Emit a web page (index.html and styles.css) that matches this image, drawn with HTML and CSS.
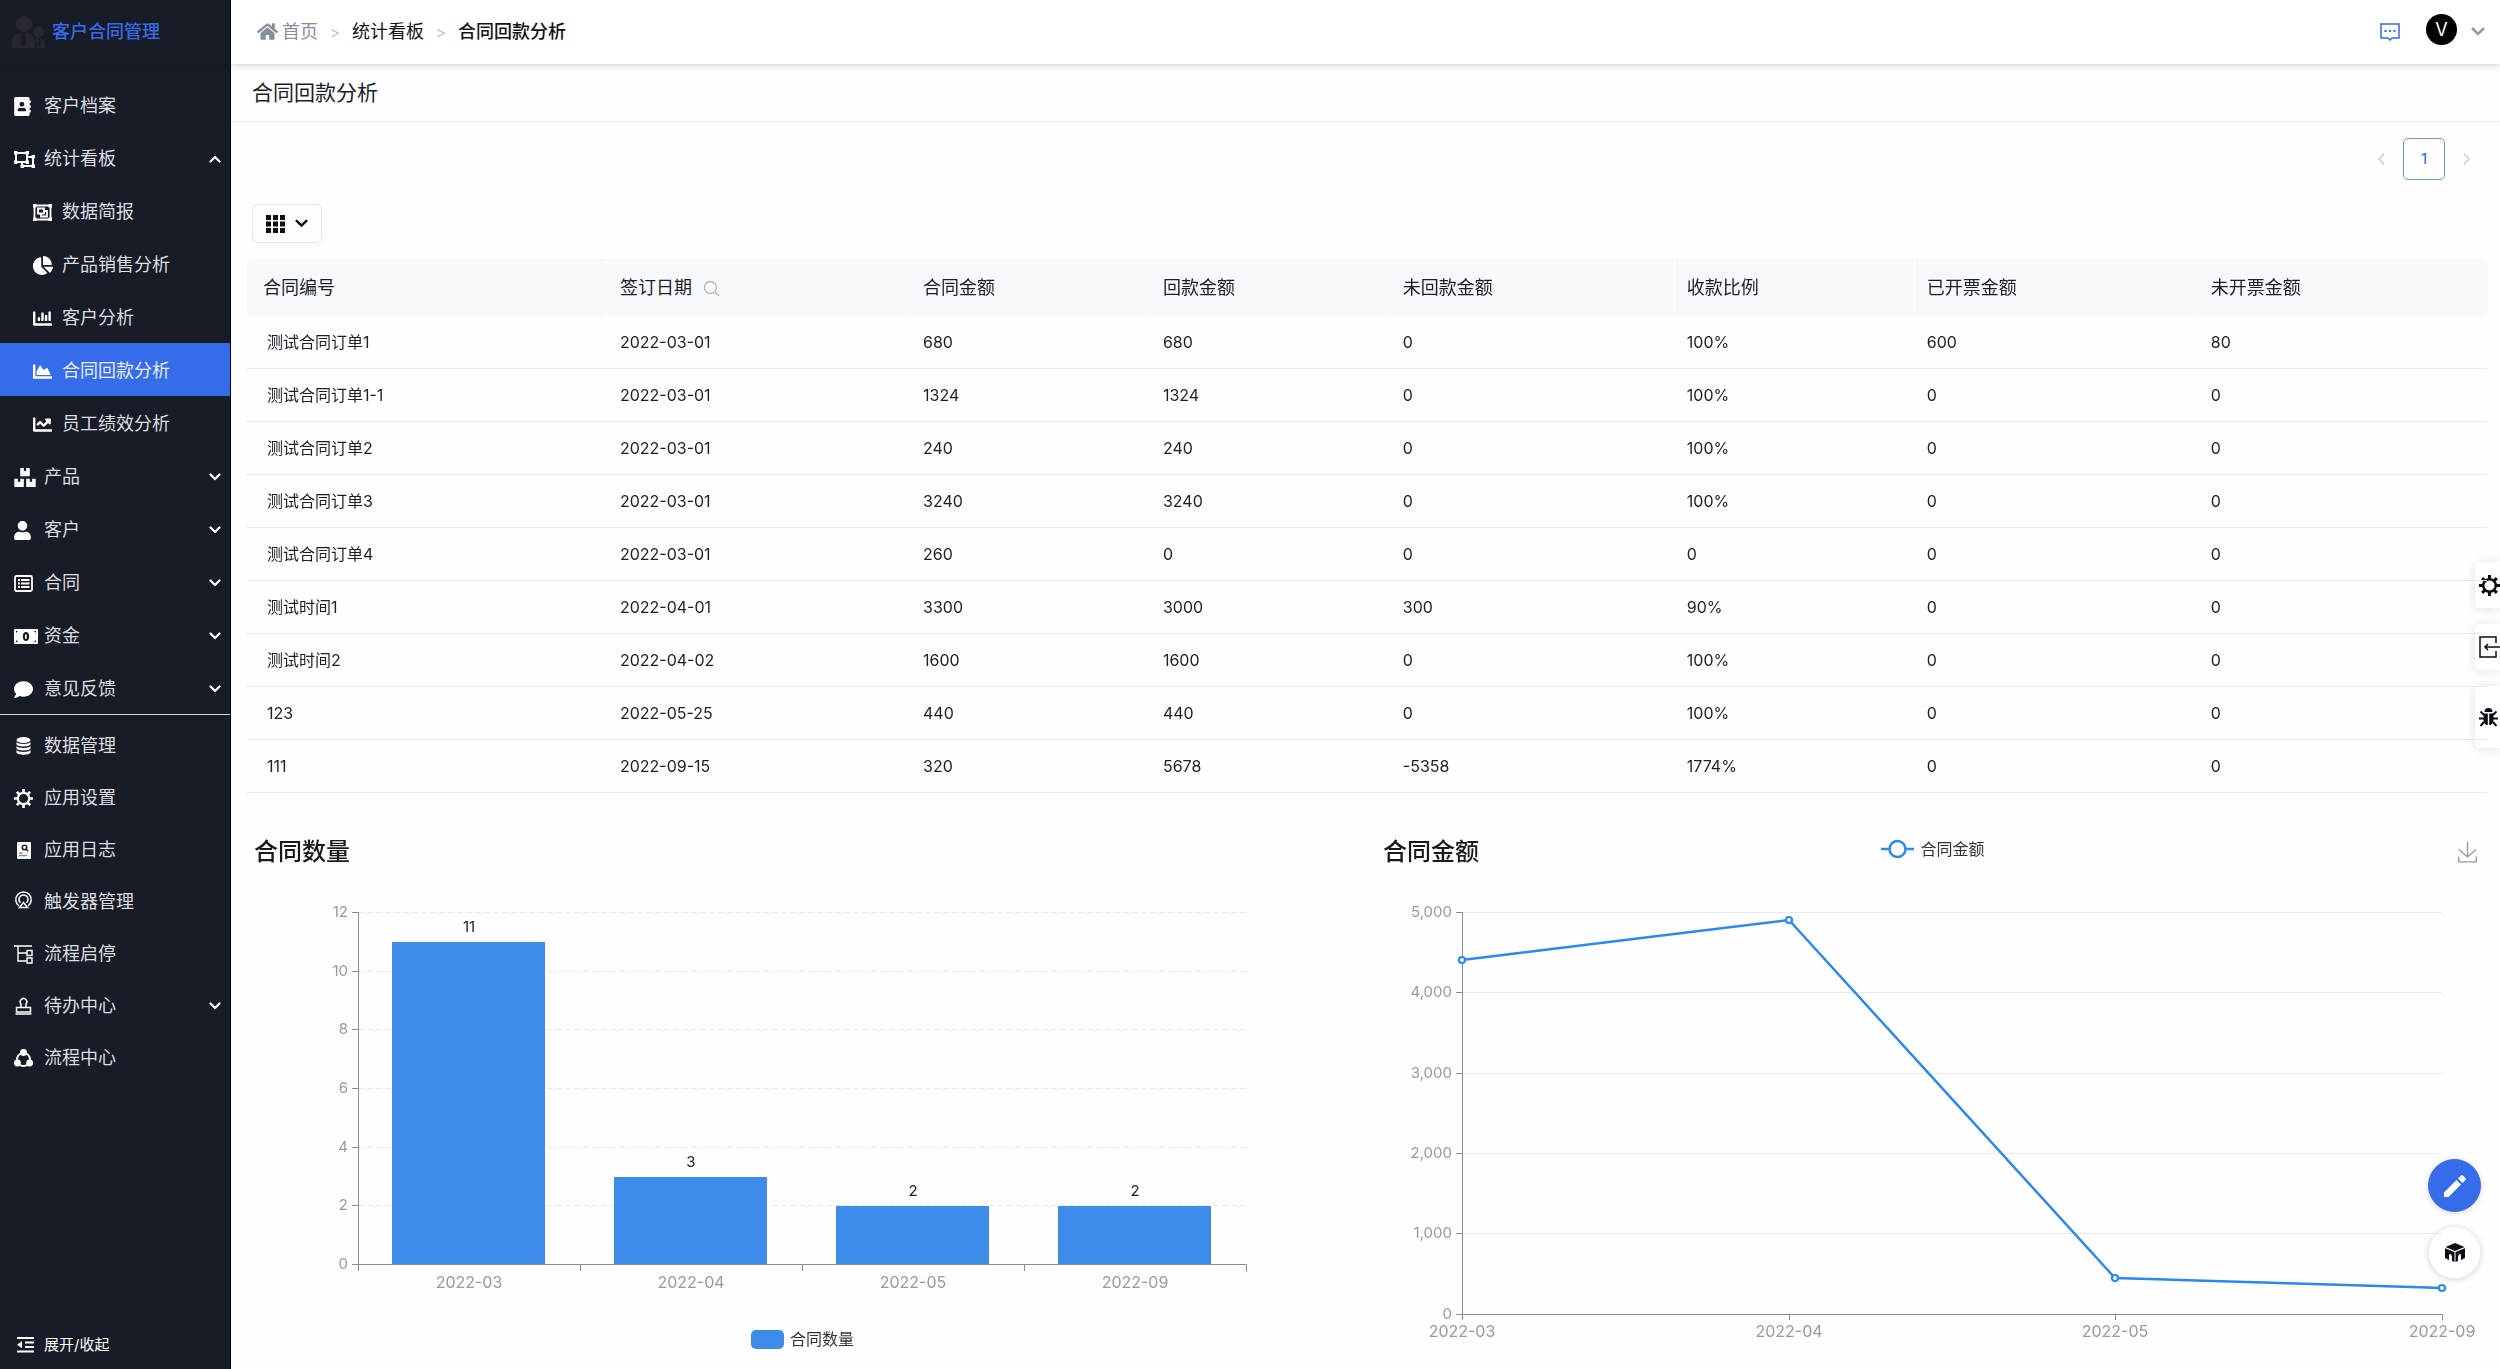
FILE: index.html
```html
<!DOCTYPE html>
<html lang="zh-CN">
<head>
<meta charset="utf-8">
<title>合同回款分析</title>
<link rel="stylesheet" href="styles.css">
</head>
<body>
<svg class="defs" aria-hidden="true">
  <symbol id="chevron" viewBox="0 0 12 8"><path d="M1.5 1.5L6 6l4.5-4.5" fill="none" stroke="currentColor" stroke-width="2.2" stroke-linecap="round"/></symbol>
  <symbol id="gear" viewBox="0 0 20 20"><circle cx="10" cy="10" r="6" fill="none" stroke="currentColor" stroke-width="2.4"/><path d="M10 0v4M10 16v4M0 10h4M16 10h4M3 3l2.8 2.8M14.2 14.2L17 17M17 3l-2.8 2.8M5.8 14.2L3 17" stroke="currentColor" stroke-width="2.8" fill="none"/></symbol>
</svg>
<div class="app">
  <aside class="sidebar">
    <a class="brand" href="#">
      <svg class="brand-logo" viewBox="0 0 33 32"><circle cx="12" cy="8" r="8"/><circle cx="26.500" cy="16" r="5.500"/><path d="M0 32v-6c0-5 3-8 8-9l2 1.500-1 9 2.500 3 2.500-3-1-9 2-1.500c5 1 8 4 8 9v6zM24.500 32v-6c0-2-1-3.500-1.500-4l3 .5-.5 6 1.500 2 1.500-2-.5-6c3 0 5 2 5 4.500v5z"/></svg>
      <span>客户合同管理</span>
    </a>
    <nav class="menu">
      <a href="#"><span class="slot"><svg width="17" height="19" viewBox="0 0 448 512"><path d="M436 160c6.600 0 12-5.400 12-12v-40c0-6.600-5.400-12-12-12h-20V48c0-26.500-21.500-48-48-48H48C21.500 0 0 21.500 0 48v416c0 26.500 21.500 48 48 48h320c26.500 0 48-21.500 48-48v-48h20c6.600 0 12-5.400 12-12v-40c0-6.600-5.400-12-12-12h-20v-64h20c6.600 0 12-5.400 12-12v-40c0-6.600-5.400-12-12-12h-20v-64h20zm-228-32c35.300 0 64 28.700 64 64s-28.700 64-64 64-64-28.700-64-64 28.700-64 64-64zm112 236.800c0 10.600-10 19.200-22.400 19.200H118.400C106 384 96 375.400 96 364.800v-19.200c0-31.800 30.100-57.600 67.200-57.600h5c12.300 5.100 25.700 8 39.800 8s27.600-2.900 39.800-8h5c37.100 0 67.200 25.800 67.200 57.600v19.200z"/></svg></span>客户档案</a>
      <button type="button" aria-expanded="true"><span class="slot"><svg width="21" height="17" viewBox="0 0 21 17"><path d="M2 2h11v9H2zM13 6h6v9H8v-4" fill="none" stroke="currentColor" stroke-width="2"/><path d="M0 0h3.500v3.500H0zM11.500 0H15v3.500h-3.500zM0 9.500h3.500V13H0zM11.500 9.500H15V13h-3.500zM17.500 4H21v3.500h-3.500zM17.500 13.500H21V17h-3.500zM6.500 13.500H10V17H6.500z"/></svg></span>统计看板<svg class="arrow up"><use href="#chevron"/></svg></button>
      <a class="sub" href="#"><span class="slot"><svg width="19" height="17" viewBox="0 0 19 17"><path d="M1.500 1.500h16v14h-16z" fill="none" stroke="currentColor" stroke-width="1.800"/><path d="M5 4.500h6v5H5zM11 7h3v5.500H8v-3" fill="none" stroke="currentColor" stroke-width="1.800"/><path d="M0 0h3.500v3.500H0zM15.500 0H19v3.500h-3.500zM0 13.500h3.500V17H0zM15.500 13.500H19V17h-3.500z"/></svg></span>数据简报</a>
      <a class="sub" href="#"><span class="slot"><svg width="20" height="19" viewBox="0 0 544 512"><path d="M527.790 288H290.500l158.030 158.030c6.040 6.040 15.980 6.530 22.190.68 38.700-36.460 65.320-85.560 73.130-140.860 1.340-9.460-6.510-17.850-16.060-17.850zm-15.830-64.800C503.720 103.740 408.260 8.280 288.800.04 279.680-.59 272 7.100 272 16.240V240h223.770c9.140 0 16.820-7.680 16.190-16.800zM224 288V50.710c0-9.550-8.390-17.400-17.840-16.060C86.990 51.490-4.100 155.600.14 280.370 4.500 408.510 114.830 513.590 243.030 511.980c50.400-.63 96.970-16.870 135.260-44.030 7.900-5.600 8.420-17.230 1.570-24.080L224 288z"/></svg></span>产品销售分析</a>
      <a class="sub" href="#"><span class="slot"><svg width="19" height="19" viewBox="0 0 512 512"><path d="M332.800 320h38.400c6.400 0 12.800-6.400 12.800-12.800V172.800c0-6.400-6.400-12.800-12.800-12.800h-38.400c-6.400 0-12.800 6.400-12.800 12.800v134.400c0 6.400 6.400 12.800 12.800 12.800zm96 0h38.400c6.400 0 12.800-6.400 12.800-12.800V76.800c0-6.400-6.400-12.800-12.800-12.800h-38.400c-6.400 0-12.800 6.400-12.800 12.800v230.400c0 6.400 6.400 12.800 12.800 12.800zm-288 0h38.400c6.400 0 12.800-6.400 12.800-12.800v-70.400c0-6.400-6.400-12.800-12.800-12.800h-38.400c-6.400 0-12.800 6.400-12.800 12.800v70.400c0 6.400 6.400 12.800 12.800 12.800zm96 0h38.400c6.400 0 12.800-6.400 12.800-12.800V108.800c0-6.400-6.400-12.800-12.800-12.800h-38.400c-6.400 0-12.800 6.400-12.800 12.800v198.400c0 6.400 6.400 12.800 12.800 12.800zM496 384H64V80c0-8.840-7.160-16-16-16H16C7.160 64 0 71.160 0 80v336c0 17.670 14.330 32 32 32h464c8.840 0 16-7.160 16-16v-32c0-8.840-7.160-16-16-16z"/></svg></span>客户分析</a>
      <a class="sub active" href="#" aria-current="page"><span class="slot"><svg width="19" height="19" viewBox="0 0 512 512"><path d="M500 384c6.600 0 12 5.400 12 12v40c0 6.600-5.400 12-12 12H12c-6.600 0-12-5.400-12-12V76c0-6.600 5.400-12 12-12h40c6.600 0 12 5.400 12 12v308h436zM372.700 159.500L288 216l-85.300-113.700c-5.100-6.800-15.500-6.300-19.900 1L96 248v104h384l-89.900-187.800c-3.200-6.500-11.400-8.700-17.400-4.700z"/></svg></span>合同回款分析</a>
      <a class="sub" href="#"><span class="slot"><svg width="19" height="19" viewBox="0 0 512 512"><path d="M496 384H64V80c0-8.840-7.160-16-16-16H16C7.160 64 0 71.160 0 80v336c0 17.670 14.330 32 32 32h464c8.840 0 16-7.160 16-16v-32c0-8.840-7.160-16-16-16zM464 96H345.940c-21.380 0-32.090 25.850-16.970 40.970l32.400 32.400L288 242.750l-73.370-73.370c-12.500-12.500-32.760-12.500-45.250 0l-68.690 68.690c-6.250 6.250-6.250 16.380 0 22.630l22.620 22.620c6.250 6.250 16.380 6.250 22.630 0L192 237.250l73.370 73.370c12.500 12.500 32.760 12.500 45.250 0l96-96 32.400 32.400c15.120 15.120 40.970 4.410 40.970-16.970V112c.01-8.840-7.150-16-15.990-16z"/></svg></span>员工绩效分析</a>
      <button type="button"><span class="slot"><svg width="22" height="19" viewBox="0 0 576 512"><path d="M560 288h-80v96l-32-21.300-32 21.300v-96h-80c-8.800 0-16 7.200-16 16v192c0 8.800 7.200 16 16 16h224c8.800 0 16-7.200 16-16V304c0-8.800-7.200-16-16-16zm-384-64h224c8.800 0 16-7.200 16-16V16c0-8.800-7.200-16-16-16h-80v96l-32-21.300L256 96V0h-80c-8.800 0-16 7.200-16 16v192c0 8.800 7.200 16 16 16zm64 64h-80v96l-32-21.300L96 384v-96H16c-8.800 0-16 7.200-16 16v192c0 8.800 7.200 16 16 16h224c8.800 0 16-7.200 16-16V304c0-8.800-7.200-16-16-16z"/></svg></span>产品<svg class="arrow"><use href="#chevron"/></svg></button>
      <button type="button"><span class="slot"><svg width="17" height="19" viewBox="0 0 448 512"><path d="M224 256c70.700 0 128-57.300 128-128S294.700 0 224 0 96 57.300 96 128s57.300 128 128 128zm89.600 32h-16.700c-22.200 10.200-46.900 16-72.900 16s-50.600-5.800-72.900-16h-16.700C60.200 288 0 348.200 0 422.400V464c0 26.500 21.500 48 48 48h352c26.500 0 48-21.500 48-48v-41.600c0-74.200-60.200-134.400-134.400-134.400z"/></svg></span>客户<svg class="arrow"><use href="#chevron"/></svg></button>
      <button type="button"><span class="slot"><svg width="19" height="17" viewBox="0 0 19 17"><rect x="1" y="1" width="17" height="15" rx="1.500" fill="none" stroke="currentColor" stroke-width="1.800"/><path d="M4 4h2v2H4zM7 4h8.500v2H7zM4 7.500h2v2H4zM7 7.500h8.500v2H7zM4 11h2v2H4zM7 11h8.500v2H7z"/></svg></span>合同<svg class="arrow"><use href="#chevron"/></svg></button>
      <button type="button"><span class="slot"><svg width="24" height="15" viewBox="0 0 24 15"><path fill-rule="evenodd" d="M1 0h22a1 1 0 0 1 1 1v13a1 1 0 0 1-1 1H1a1 1 0 0 1-1-1V1a1 1 0 0 1 1-1zM2 2v2l2-2zM22 2v2l-2-2zM2 13v-2l2 2zM22 13v-2l-2 2zM12 3c-2 0-3.200 2-3.200 4.500S10 12 12 12s3.200-2 3.200-4.500S14 3 12 3z"/><path d="M11 5.500h1.700v4.200H11z"/></svg></span>资金<svg class="arrow"><use href="#chevron"/></svg></button>
      <button type="button"><span class="slot"><svg width="19" height="19" viewBox="0 0 512 512"><path d="M256 32C114.600 32 0 125.100 0 240c0 49.600 21.400 95 57 130.700C44.500 421.100 2.700 466 2.200 466.500c-2.200 2.300-2.800 5.700-1.500 8.700S4.800 480 8 480c66.300 0 116-31.800 140.600-51.400 32.700 12.300 69 19.400 107.400 19.400 141.400 0 256-93.100 256-208S397.400 32 256 32z"/></svg></span>意见反馈<svg class="arrow"><use href="#chevron"/></svg></button>
    </nav>
    <nav class="menu admin">
      <a href="#"><span class="slot"><svg width="19" height="18" viewBox="0 0 19 18"><ellipse cx="9.500" cy="3" rx="7" ry="3"/><path d="M2.500 5c1 2.500 13 2.500 14 0v2.500c-1 2.500-13 2.500-14 0zM2.500 9c1 2.500 13 2.500 14 0v2.500c-1 2.500-13 2.500-14 0zM2.500 13c1 2.500 13 2.500 14 0v2.500c-1 3-13 3-14 0z"/></svg></span>数据管理</a>
      <a href="#"><span class="slot"><svg width="19" height="19"><use href="#gear"/></svg></span>应用设置</a>
      <a href="#"><span class="slot"><svg width="19" height="17" viewBox="0 0 19 17"><rect x="3" width="14" height="17" rx="1"/><circle cx="10.500" cy="5.500" r="2.200" fill="none" stroke="#181c26" stroke-width="1.500"/><path d="M12 7l2.200 2.200" stroke="#181c26" stroke-width="1.500"/><path d="M5 11h3.500M5 13.500h8" stroke="#8a8d93" stroke-width="1.400"/></svg></span>应用日志</a>
      <a href="#"><span class="slot"><svg width="19" height="23" viewBox="0 0 19 23"><g fill="none" stroke="currentColor" stroke-width="1.500"><path d="M5 15a7.700 7.700 0 1 1 9 0M6.500 11.800a4.500 4.500 0 1 1 6 0M9.500 11.500L13.500 16.500h-8z"/></g></svg></span>触发器管理</a>
      <a href="#"><span class="slot"><svg width="19" height="19" viewBox="0 0 19 19"><path d="M0 1h18M4 1v15h9M4 8h9M13 5.500h5v5h-5zM13 13h5v5h-5z" fill="none" stroke="currentColor" stroke-width="1.400"/></svg></span>流程启停</a>
      <button type="button"><span class="slot"><svg width="19" height="18" viewBox="0 0 19 18"><path d="M7 10.500v-3.500a3.300 3.300 0 1 1 5 0v3.500zM2.500 10.500h14V15h-14zM1.500 17h16" fill="none" stroke="currentColor" stroke-width="1.500"/></svg></span>待办中心<svg class="arrow"><use href="#chevron"/></svg></button>
      <a href="#"><span class="slot"><svg width="19" height="19" viewBox="0 0 19 19"><circle cx="9.500" cy="10.500" r="6.500" fill="none" stroke="currentColor" stroke-width="2"/><circle cx="9.500" cy="3.500" r="3.400"/><circle cx="3.400" cy="14" r="3.400"/><circle cx="15.600" cy="14" r="3.400"/></svg></span>流程中心</a>
    </nav>
    <button type="button" class="collapse"><span class="slot"><svg width="17" height="16" viewBox="0 0 17 16"><path d="M0 0h17v2H0zM8 4.500h9v2H8zM8 9h9v2H8zM0 13.500h17v2H0zM0 7.700l5-3.500v7z"/></svg></span>展开/收起</button>
  </aside>
  <div class="page">
    <header class="topbar">
      <nav class="crumbs">
        <a class="home" href="#"><svg width="21" height="19" viewBox="0 0 576 512"><path d="M280.370 148.260L96 300.110V464a16 16 0 0 0 16 16l112.060-.29a16 16 0 0 0 15.920-16V368a16 16 0 0 1 16-16h64a16 16 0 0 1 16 16v95.640a16 16 0 0 0 16 16.050L464 480a16 16 0 0 0 16-16V300L295.670 148.260a12.190 12.190 0 0 0-15.300 0zM571.600 251.470L488 182.560V44.050a12 12 0 0 0-12-12h-56a12 12 0 0 0-12 12v72.610L318.470 43a48 48 0 0 0-61 0L4.340 251.470a12 12 0 0 0-1.600 16.900l25.500 31A12 12 0 0 0 45.150 301l235.220-193.740a12.190 12.190 0 0 1 15.300 0L530.900 301a12 12 0 0 0 16.900-1.600l25.500-31a12 12 0 0 0-1.700-16.930z"/></svg>首页</a>
        <span class="sep">&gt;</span><a href="#">统计看板</a><span class="sep">&gt;</span><span class="here">合同回款分析</span>
      </nav>
      <div class="user">
        <button type="button" class="msg" aria-label="消息"><svg width="20" height="18" viewBox="0 0 20 18"><path d="M1 1h18v14h-7l-2 2-2-2H1z" fill="none" stroke="currentColor" stroke-width="1.500"/><circle cx="5.500" cy="8" r="1.200"/><circle cx="10" cy="8" r="1.200"/><circle cx="14.500" cy="8" r="1.200"/></svg></button>
        <span class="avatar">V</span>
        <button type="button" class="more" aria-label="账户菜单"><svg width="14" height="9" viewBox="0 0 14 9"><path d="M1 1l6 6 6-6" fill="none" stroke="currentColor" stroke-width="2.500"/></svg></button>
      </div>
    </header>
    <h1 class="title">合同回款分析</h1>
    <main class="content">
      <nav class="pager" aria-label="分页">
        <button type="button" aria-label="上一页" disabled><svg width="7" height="12" viewBox="0 0 7 12"><path d="M6 0.500L1 6l5 5.500" fill="none" stroke="currentColor" stroke-width="1.200"/></svg></button>
        <button type="button" class="current">1</button>
        <button type="button" aria-label="下一页" disabled><svg width="7" height="12" viewBox="0 0 7 12"><path d="M1 0.500L6 6l-5 5.500" fill="none" stroke="currentColor" stroke-width="1.200"/></svg></button>
      </nav>
      <button type="button" class="view" aria-label="视图"><svg width="19" height="18" viewBox="0 0 19 18"><path d="M0 0h5v5H0zM7 0h5v5H7zM14 0h5v5h-5zM0 6.500h5v5H0zM7 6.500h5v5H7zM14 6.500h5v5h-5zM0 13h5v5H0zM7 13h5v5H7zM14 13h5v5h-5z"/></svg><svg width="13" height="9"><use href="#chevron"/></svg></button>
      <table class="grid">
        <colgroup><col class="c-name"><col class="c-date"><col class="c-amt"><col class="c-amt"><col class="c-wide"><col class="c-amt"><col class="c-wide"><col></colgroup>
        <thead><tr><th>合同编号</th><th>签订日期<svg class="find" width="17" height="17" viewBox="0 0 17 17"><circle cx="7.500" cy="7.500" r="6" fill="none" stroke="currentColor" stroke-width="1.300"/><path d="M12 12l4 4" stroke="currentColor" stroke-width="1.300"/></svg></th><th>合同金额</th><th>回款金额</th><th>未回款金额</th><th>收款比例</th><th>已开票金额</th><th>未开票金额</th></tr></thead>
        <tbody>
          <tr><td>测试合同订单1</td><td>2022-03-01</td><td>680</td><td>680</td><td>0</td><td>100%</td><td>600</td><td>80</td></tr>
          <tr><td>测试合同订单1-1</td><td>2022-03-01</td><td>1324</td><td>1324</td><td>0</td><td>100%</td><td>0</td><td>0</td></tr>
          <tr><td>测试合同订单2</td><td>2022-03-01</td><td>240</td><td>240</td><td>0</td><td>100%</td><td>0</td><td>0</td></tr>
          <tr><td>测试合同订单3</td><td>2022-03-01</td><td>3240</td><td>3240</td><td>0</td><td>100%</td><td>0</td><td>0</td></tr>
          <tr><td>测试合同订单4</td><td>2022-03-01</td><td>260</td><td>0</td><td>0</td><td>0</td><td>0</td><td>0</td></tr>
          <tr><td>测试时间1</td><td>2022-04-01</td><td>3300</td><td>3000</td><td>300</td><td>90%</td><td>0</td><td>0</td></tr>
          <tr><td>测试时间2</td><td>2022-04-02</td><td>1600</td><td>1600</td><td>0</td><td>100%</td><td>0</td><td>0</td></tr>
          <tr><td>123</td><td>2022-05-25</td><td>440</td><td>440</td><td>0</td><td>100%</td><td>0</td><td>0</td></tr>
          <tr><td>111</td><td>2022-09-15</td><td>320</td><td>5678</td><td>-5358</td><td>1774%</td><td>0</td><td>0</td></tr>
        </tbody>
      </table>
      <div class="charts">
        <section class="chart">
          <div class="chart-head"><h2>合同数量</h2></div>
          <svg class="plot" viewBox="0 0 1111 498" role="img" aria-label="合同数量">
            <g class="dash"><path d="M111 41.500h888M111 100.500h888M111 158.500h888M111 217.500h888M111 276.500h888M111 334.500h888"/></g>
            <g class="bars"><path d="M145 71h153v323H145zM367 306h153v88H367zM589 335h153v59H589zM811 335h153v59H811z"/></g>
            <path class="axis" d="M111.500 41v359M105 393.500h894.500v7M105 41.500h6M105 100.500h6M105 158.500h6M105 217.500h6M105 276.500h6M105 334.500h6M333.500 393v7M555.500 393v7M777.500 393v7"/>
            <g class="ylab"><text x="101" y="46">12</text><text x="101" y="105">10</text><text x="101" y="163">8</text><text x="101" y="222">6</text><text x="101" y="281">4</text><text x="101" y="339">2</text><text x="101" y="398">0</text></g>
            <g class="xlab"><text x="222" y="417">2022-03</text><text x="444" y="417">2022-04</text><text x="666" y="417">2022-05</text><text x="888" y="417">2022-09</text></g>
            <g class="vals"><text x="222" y="61">11</text><text x="444" y="296">3</text><text x="666" y="325">2</text><text x="888" y="325">2</text></g>
            <rect class="key" x="504" y="459" width="33" height="19" rx="5"/>
            <text class="keytext" x="543" y="474">合同数量</text>
          </svg>
        </section>
        <section class="chart">
          <div class="chart-head"><h2>合同金额</h2>
            <span class="legend"><svg width="33" height="20" viewBox="0 0 33 20"><path d="M0 10h33" stroke="currentColor" stroke-width="2.500"/><circle cx="16.500" cy="10" r="8" fill="#fff" stroke="currentColor" stroke-width="2.500"/></svg>合同金额</span>
            <button type="button" class="save" aria-label="下载"><svg width="19" height="21" viewBox="0 0 19 21"><path d="M9.500 0v15M1 7.500L9.500 15 18 7.500M.7 14.500v5.300h17.600v-5.300" fill="none" stroke="currentColor" stroke-width="1.300"/></svg></button></div>
          <svg class="plot" viewBox="0 0 1111 498" role="img" aria-label="合同金额">
            <path class="split" d="M86 41.500h980M86 121.500h980M86 202.500h980M86 282.500h980M86 362.500h980"/>
            <path class="axis" d="M86.500 41v408M80 443.500h986.500v6M80 41.500h6M80 121.500h6M80 202.500h6M80 282.500h6M80 362.500h6M413.500 443v6M739.500 443v6"/>
            <path class="line" d="M86 89l327-40 326 358 327 10"/>
            <g class="dots"><circle cx="86" cy="89" r="3"/><circle cx="413" cy="49" r="3"/><circle cx="739" cy="407" r="3"/><circle cx="1066" cy="417" r="3"/></g>
            <g class="ylab"><text x="76" y="46">5,000</text><text x="76" y="126">4,000</text><text x="76" y="207">3,000</text><text x="76" y="287">2,000</text><text x="76" y="367">1,000</text><text x="76" y="448">0</text></g>
            <g class="xlab"><text x="86" y="466">2022-03</text><text x="413" y="466">2022-04</text><text x="739" y="466">2022-05</text><text x="1066" y="466">2022-09</text></g>
          </svg>
        </section>
      </div>
    </main>
  </div>
  <div class="dock">
    <button type="button" aria-label="设置"><svg width="21" height="21"><use href="#gear"/></svg></button>
    <button type="button" aria-label="退出"><svg width="22" height="22" viewBox="0 0 22 22"><path d="M17 7V1H1v20h16v-6M6 11h16M9 8l-3 3 3 3" fill="none" stroke="currentColor" stroke-width="1.500"/></svg></button>
    <button type="button" class="tall" aria-label="反馈问题"><svg width="19" height="19" viewBox="0 0 19 19"><path d="M5.500 4a4 4 0 0 1 8 0zM4.500 5.500h4.300V17h-1C5.500 16.500 4.500 14 4.500 12zM10.200 5.500h4.300V12c0 2-1 4.500-3.300 5h-1z"/><path d="M1.500 3.500L5 7M0 10.500h5M1.500 18L5 14M17.500 3.500L14 7M19 10.500h-5M17.500 18L14 14" stroke="currentColor" stroke-width="1.900" fill="none"/></svg></button>
  </div>
  <div class="fabs">
    <button type="button" class="edit" aria-label="编辑"><svg width="22" height="22" viewBox="0 0 22 22"><path d="M0 17.500V22h4.500L17 9.500 12.500 5zM14 3.500L18.500 8l2.800-2.800a1.500 1.500 0 0 0 0-2.200L19 .7a1.500 1.500 0 0 0-2.200 0z"/></svg></button>
    <button type="button" aria-label="应用"><svg width="20" height="19" viewBox="0 0 20 19"><path d="M10 0l9.500 4L10 8 .5 4zM0 5.200L9.500 9v10L7 18v-5l-1.500-2-1.500.5V17L0 15zM20 5.200L10.500 9v10l2.500-1v-5l1.500-2 1.500.5V17l4-2z"/></svg></button>
  </div>
</div>
</body>
</html>
```
FILE: styles.css
```css
* { box-sizing: border-box; }
body {
  margin: 0;
  color: #1b1f2b;
  background: #fefefe;
  font: 18px/28px Inter, "Noto Sans CJK SC", sans-serif;
}
a { color: inherit; text-decoration: none; }
button { margin: 0; padding: 0; border: 0; background: none; color: inherit; font: inherit; text-align: left; }
svg { display: block; fill: currentColor; flex: none; }
.defs { position: absolute; width: 0; height: 0; }

.app { display: flex; min-height: 100vh; }

/* sidebar */
.sidebar {
  display: flex;
  flex-direction: column;
  width: 231px;
  flex: none;
  border-right: 1px solid #05070c;
  background: #181c26;
  color: #fff;
}
.brand {
  display: flex;
  align-items: center;
  gap: 7px;
  height: 64px;
  padding-left: 12px;
  color: #366aea;
  font-weight: 500;
  box-shadow: 0 2px 4px rgba(0, 0, 0, .15);
}
.brand-logo { width: 33px; height: 32px; color: #272633; }
.menu { display: flex; flex-direction: column; padding-top: 14px; }
.menu > * {
  display: flex;
  align-items: center;
  width: 100%;
  height: 53px;
  padding: 3px 9px 0 14px;
  color: #dcdde0;
}
.slot { display: flex; width: 30px; flex: none; color: #fff; }
.menu > .sub { padding-left: 33px; }
.sub .slot { width: 29px; }
.menu > .active { background: #366bea; color: #e8edfc; }
.arrow { width: 12px; height: 8px; margin-left: auto; color: #fff; }
.up { transform: rotate(180deg); }
.admin { padding-top: 4px; border-top: 1px solid #d5d6d8; }
.admin > * { height: 52px; padding-top: 2px; }
.collapse {
  display: flex;
  align-items: center;
  height: 48px;
  margin-top: auto;
  padding-left: 17px;
  font-size: 15px;
}
.collapse .slot { width: 27px; }

/* top bar */
.page { flex: 1; min-width: 0; }
.topbar {
  position: relative;
  display: flex;
  justify-content: space-between;
  height: 64px;
  padding: 0 15px 1px 26px;
  background: #fff;
  box-shadow: 0 1px 8px rgba(0, 21, 20, .2);
}
.crumbs, .crumbs a, .user { display: flex; align-items: center; }
.crumbs { color: #11131a; }
.crumbs .home { gap: 4px; color: #868d9d; }
.sep { width: 34px; color: #c3c5ca; text-align: center; font-size: 16px; }
.here { font-weight: 500; }
.msg { margin-right: 26px; color: #366bea; }
.avatar {
  width: 31px;
  height: 31px;
  margin: 0 14px 5px 0;
  border-radius: 50%;
  background: #000;
  color: #fff;
  line-height: 31px;
  text-align: center;
}
.more { color: #999; }
.title {
  margin: 0;
  padding: 13px 21px 12px;
  border-bottom: 1px solid #e8e9ea;
  font-size: 21px;
  line-height: 32px;
  font-weight: 400;
}

/* content */
.content { padding: 16px 13px 0 16px; }
.pager { display: flex; justify-content: flex-end; align-items: center; gap: 18px; padding-right: 17px; color: #c4c4c4; }
.pager .current {
  width: 42px;
  height: 42px;
  border: 1px solid #6f94f0;
  border-radius: 5px;
  color: #2563eb;
  font-size: 15px;
  text-align: center;
}
.view {
  display: flex;
  align-items: center;
  gap: 10px;
  width: 70px;
  height: 39px;
  margin: 24px 0 16px 5px;
  padding-left: 13px;
  border: 1px solid #e6e6e8;
  border-radius: 5px;
  color: #0c0e15;
}
.grid {
  position: relative;
  z-index: 2;
  width: 100%;
  table-layout: fixed;
  border-spacing: 0;
}
.c-name { width: 16.070%; }
.c-date { width: 13.530%; }
.c-amt { width: 10.710%; }
.c-wide { width: 12.680%; }
.grid th {
  height: 57px;
  padding: 0 12px;
  background: #f7f8fa;
  font-weight: 400;
  text-align: left;
}
.grid th + th { border-left: 1px solid #fefefe; }
.grid th:first-child { padding-left: 16px; border-top-left-radius: 5px; }
.grid th:last-child { border-top-right-radius: 5px; }
.find { display: inline-block; margin-left: 11px; vertical-align: -3px; color: #b3b6bd; }
.grid td {
  height: 53px;
  padding: 0 13px;
  border-bottom: 1px solid #e9e9eb;
  font-size: 16px;
}
.grid td:first-child { padding-left: 20px; }

/* charts */
.charts { position: relative; z-index: 2; display: grid; grid-template-columns: 1fr 1fr; gap: 18px; pointer-events: none; }
.chart { padding-top: 40px; }
.chart-head {
  display: grid;
  grid-template-columns: 1fr auto 1fr;
  align-items: center;
  height: 38px;
  padding: 0 10px 0 7px;
}
.chart h2 { margin: 0; color: #1a1a1a; font-size: 24px; line-height: 38px; font-weight: 500; }
.legend { display: flex; align-items: center; gap: 6px; padding: 0 0 7px 6px; color: #333; font-size: 16px; }
.legend svg { color: #2a88ee; }
.save { justify-self: end; color: #999; }
.plot { width: 100%; height: auto; overflow: visible; }
.plot text { font-size: 15px; }
.plot .xlab text, .plot .keytext { font-size: 16px; }
.keytext { fill: #333; }
.dash { fill: none; stroke: #e8e8e8; stroke-width: 1; stroke-dasharray: 6 3; }
.split { fill: none; stroke: #e8e8e8; }
.axis { fill: none; stroke: #8c8c8c; }
.bars, .key { fill: #3d8ce9; }
.line { fill: none; stroke: #2a88ee; stroke-width: 2.5; }
.dots { fill: #fff; stroke: #2a88ee; stroke-width: 2.2; }
.ylab, .xlab { fill: #999; }
.ylab { text-anchor: end; }
.xlab, .vals { text-anchor: middle; }
.vals { fill: #222; }

/* floating controls */
.dock, .fabs { position: fixed; z-index: 1; right: 0; display: flex; flex-direction: column; gap: 16px; }
.dock { top: 562px; width: 25px; color: #0c0e15; }
.dock button {
  display: flex;
  align-items: center;
  width: 25px;
  height: 46px;
  padding-left: 4px;
  overflow: clip;
  border-radius: 5px 0 0 5px;
  background: #fff;
  box-shadow: 0 1px 12px rgba(0, 0, 0, .12);
}
.dock .tall { height: 62px; }
.fabs { right: 19px; bottom: 90px; gap: 14px; }
.fabs button {
  display: flex;
  align-items: center;
  justify-content: center;
  width: 53px;
  height: 53px;
  border: 1px solid #ececec;
  border-radius: 50%;
  background: #fff;
  color: #0c0e15;
  box-shadow: 0 1px 6px rgba(0, 0, 0, .15);
}
.fabs .edit { border-color: #366bea; background: #366bea; color: #fff; }
```
